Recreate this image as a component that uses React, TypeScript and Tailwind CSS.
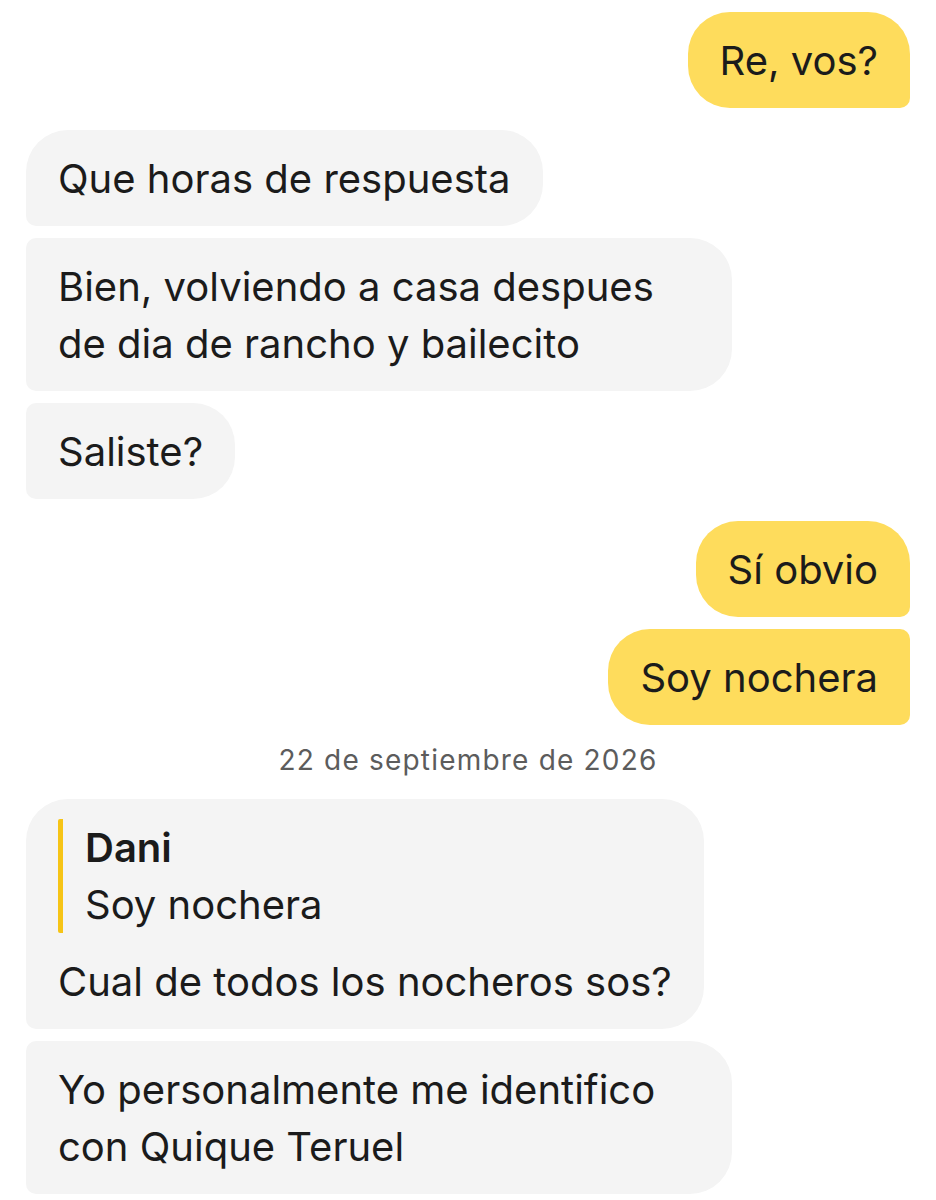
import React from 'react';

type Msg = {
  id: number;
  text: string[];
  mine: boolean;
  first: boolean;
  wide?: boolean;
  quote?: { author: string; text: string };
};

const messages: Msg[] = [
  { id: 1, text: ['Re, vos?'], mine: true, first: true },
  { id: 2, text: ['Que horas de respuesta'], mine: false, first: true },
  { id: 3, text: ['Bien, volviendo a casa despues', 'de dia de rancho y bailecito'], mine: false, first: false, wide: true },
  { id: 4, text: ['Saliste?'], mine: false, first: false },
  { id: 5, text: ['Sí obvio'], mine: true, first: true },
  { id: 6, text: ['Soy nochera'], mine: true, first: false },
];

const later: Msg[] = [
  {
    id: 7,
    text: ['Cual de todos los nocheros sos?'],
    mine: false,
    first: true,
    quote: { author: 'Dani', text: 'Soy nochera' },
  },
  { id: 8, text: ['Yo personalmente me identifico', 'con Quique Teruel'], mine: false, first: false, wide: true },
];

const Bubble = ({ msg, spaced }: { msg: Msg; spaced?: boolean }) => {
  // corner shape depends on side and position in the group
  let shape = '';
  if (msg.mine) {
    shape = msg.first
      ? 'bg-[#fedc5c] rounded-tl-[42px] rounded-bl-[42px] rounded-tr-[42px] rounded-br-[10px]'
      : 'bg-[#fedc5c] rounded-tl-[42px] rounded-bl-[42px] rounded-tr-[10px] rounded-br-[10px]';
  } else {
    shape = msg.first
      ? 'bg-[#f4f4f4] rounded-tr-[42px] rounded-br-[42px] rounded-tl-[42px] rounded-bl-[10px]'
      : 'bg-[#f4f4f4] rounded-tr-[42px] rounded-br-[42px] rounded-tl-[10px] rounded-bl-[10px]';
  }

  return (
    <div className={`flex ${msg.mine ? 'justify-end' : 'justify-start'} ${spaced ? 'mt-[10px]' : ''}`}>
      <div
        className={`${shape} ${msg.wide ? 'w-[706px]' : ''} pl-[32px] pr-[32px] pt-[20px] pb-[19px]`}
      >
        {msg.quote && (
          <div className="border-l-[5px] border-[#f6c416] rounded-[2px] pl-[22px] mb-[20px]">
            <div className="font-semibold leading-[57px]">{msg.quote.author}</div>
            <div className="leading-[57px]">{msg.quote.text}</div>
          </div>
        )}
        {msg.text.map((line, i) => (
          <div key={i} className="leading-[57px] whitespace-nowrap">
            {line}
          </div>
        ))}
      </div>
    </div>
  );
};

export default function App() {
  return (
    <div
      className="w-[936px] min-h-[1200px] bg-white text-[#1b1b1b] text-[40px] px-[26px] pt-[12px]"
      style={{ fontFamily: 'Inter, "Noto Sans", sans-serif' }}
    >
      <div className="flex flex-col gap-[12px]">
        <Bubble msg={messages[0]} />
        <Bubble msg={messages[1]} spaced />
        <Bubble msg={messages[2]} />
        <Bubble msg={messages[3]} />
        <Bubble msg={messages[4]} spaced />
        <Bubble msg={messages[5]} />
      </div>

      <div className="flex justify-center pt-[19px] pb-[23px] leading-[32px] text-[28px] tracking-[1.2px] text-[#5c5c5c]">
        22 de septiembre de 2026
      </div>

      <div className="flex flex-col gap-[12px]">
        {later.map((m) => (
          <Bubble key={m.id} msg={m} />
        ))}
      </div>
    </div>
  );
}
